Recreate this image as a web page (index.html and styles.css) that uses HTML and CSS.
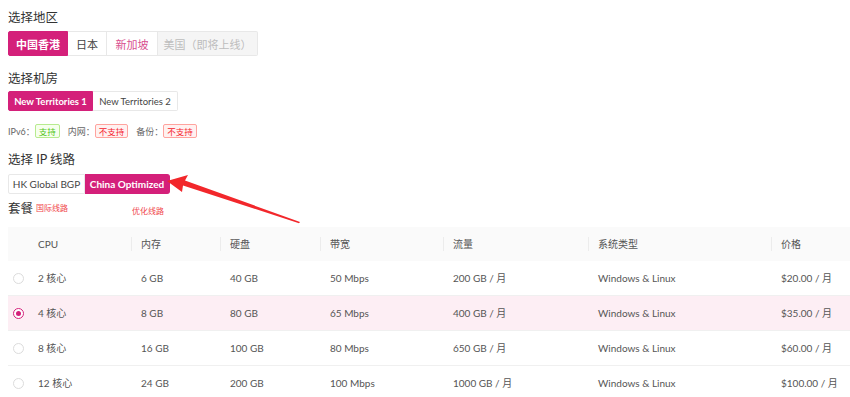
FILE: index.html
```html
<!DOCTYPE html>
<html lang="zh-CN">
<head>
<meta charset="utf-8">
<title>选择套餐</title>
<link rel="stylesheet" href="styles.css">
</head>
<body>
<div class="page">
  <div class="title">选择地区</div>
  <div class="group group-lg">
    <span class="btn active">中国香港</span>
    <span class="btn">日本</span>
    <span class="btn hover">新加坡</span>
    <span class="btn disabled">美国（即将上线）</span>
  </div>

  <div class="title mt">选择机房</div>
  <div class="group group-sm group-room">
    <span class="btn active">New Territories 1</span>
    <span class="btn">New Territories 2</span>
  </div>

  <div class="features">
    <span class="label">IPv6：</span><span class="tag tag-ok">支持</span>
    <span class="label">内网：</span><span class="tag tag-no">不支持</span>
    <span class="label">备份：</span><span class="tag tag-no">不支持</span>
  </div>

  <div class="title mt2">选择 IP 线路</div>
  <div class="group group-sm group-line">
    <span class="btn">HK Global BGP</span>
    <span class="btn active">China Optimized</span>
  </div>

  <div class="title plan">套餐</div>

  <div class="table">
    <div class="row head">
      <div class="cell"></div>
      <div class="cell">CPU</div>
      <div class="cell sep">内存</div>
      <div class="cell sep">硬盘</div>
      <div class="cell sep">带宽</div>
      <div class="cell sep">流量</div>
      <div class="cell sep">系统类型</div>
      <div class="cell sep">价格</div>
    </div>
    <div class="row">
      <div class="cell"><span class="radio"></span></div>
      <div class="cell">2 核心</div><div class="cell">6 GB</div><div class="cell">40 GB</div><div class="cell">50 Mbps</div><div class="cell">200 GB / 月</div><div class="cell">Windows &amp; Linux</div><div class="cell">$20.00 / 月</div>
    </div>
    <div class="row selected">
      <div class="cell"><span class="radio checked"></span></div>
      <div class="cell">4 核心</div><div class="cell">8 GB</div><div class="cell">80 GB</div><div class="cell">65 Mbps</div><div class="cell">400 GB / 月</div><div class="cell">Windows &amp; Linux</div><div class="cell">$35.00 / 月</div>
    </div>
    <div class="row">
      <div class="cell"><span class="radio"></span></div>
      <div class="cell">8 核心</div><div class="cell">16 GB</div><div class="cell">100 GB</div><div class="cell">80 Mbps</div><div class="cell">650 GB / 月</div><div class="cell">Windows &amp; Linux</div><div class="cell">$60.00 / 月</div>
    </div>
    <div class="row">
      <div class="cell"><span class="radio"></span></div>
      <div class="cell">12 核心</div><div class="cell">24 GB</div><div class="cell">200 GB</div><div class="cell">100 Mbps</div><div class="cell">1000 GB / 月</div><div class="cell">Windows &amp; Linux</div><div class="cell">$100.00 / 月</div>
    </div>
  </div>

  <span class="note note-1">国际线路</span>
  <span class="note note-2">优化线路</span>
  <svg class="arrow" width="850" height="397" viewBox="0 0 850 397">
    <polygon points="167,181 188,175 185,180.5 300,222 299,223.2 183,185.5 182,192" fill="#f2272b"/>
  </svg>
</div>
</body>
</html>
```
FILE: styles.css
```css
* { box-sizing: border-box; }
html, body { margin: 0; padding: 0; background: #fff; }
body {
  font-family: Lato, "Noto Sans CJK SC", sans-serif;
  color: #333;
  overflow: hidden;
}
.page {
  position: relative;
  padding: 8px 0 0 8px;
  width: 850px;
  height: 397px;
}
.title {
  font-size: 12.5px;
  line-height: 20px;
  height: 20px;
  color: #333;
  margin-bottom: 3px;
}
.title.mt { margin-top: 13px; margin-bottom: 2px; }
.title.mt2 { margin-top: 12px; margin-bottom: 4px; }
.title.plan { margin-top: 5px; margin-bottom: 8px; }

.group { display: flex; }
.btn {
  display: flex;
  align-items: center;
  justify-content: center;
  border: 1px solid #e8e8e8;
  border-left-width: 0;
  background: #fff;
  color: #444;
  white-space: nowrap;
}
.btn:first-child { border-left-width: 1px; border-radius: 2px 0 0 2px; }
.btn:last-child { border-radius: 0 2px 2px 0; }
.btn.active { background: #d4207a; border-color: #d4207a; color: #fff; font-weight: 700; }
.btn.hover { color: #d9508f; }
.btn.disabled { background: #f5f5f5; color: #bdbdbd; }

.group-lg .btn { height: 25px; font-size: 11px; padding: 0 8px; }
.group-lg .btn:first-child { width: 60px; padding: 0; }
.group-lg .btn:nth-child(2) { width: 39px; padding: 0; }
.group-lg .btn:nth-child(3) { width: 51px; padding: 0; }
.group-lg .btn.disabled { padding: 0 4px; width: 100px; }
.group-sm .btn { height: 20px; font-size: 9.5px; padding: 0; }
.group-room .btn { width: 85px; }
.group-line .btn { font-size: 10px; }
.group-line .btn:first-child { width: 77px; }
.group-line .btn.active { width: 85px; border-radius: 0 3px 3px 0; }

.features {
  display: flex;
  align-items: center;
  height: 14px;
  margin-top: 13px;
  font-size: 9px;
}
.label { color: #666; }
.tag {
  display: inline-flex;
  align-items: center;
  height: 14px;
  padding: 0 3px;
  border: 1px solid;
  border-radius: 2px;
  margin-right: 8px;
  font-size: 8.5px;
}
.tag-ok { background: #f6ffed; border-color: #b7eb8f; color: #52c41a; }
.tag-no { background: #fff1f0; border-color: #ffa39e; color: #f5222d; }

.table { margin-right: -8px; width: 842px; font-size: 10px; color: #555; }
.row {
  display: grid;
  grid-template-columns: 20px 103px 89px 100px 123px 145px 183px 79px;
  height: 35px;
  align-items: center;
  border-bottom: 1px solid #f0f0f0;
}
.row.head { height: 34px; background: #fafafa; border-bottom: 0; color: #555; }
.row.selected { background: #fdeef4; }
.cell { padding-left: 10px; position: relative; white-space: nowrap; line-height: 14px; }
.row .cell:first-child { padding-left: 0; display: flex; justify-content: center; }
.cell.sep::before {
  content: "";
  position: absolute;
  left: 0;
  top: 0;
  width: 1px;
  height: 14px;
  background: #ececec;
}
.radio {
  display: block;
  width: 11px;
  height: 11px;
  border: 1px solid #dcdcdc;
  border-radius: 50%;
  background: #fff;
  position: relative;
}
.radio.checked { border-color: #d4207a; }
.radio.checked::after {
  content: "";
  position: absolute;
  left: 2px; top: 2px;
  width: 5px; height: 5px;
  border-radius: 50%;
  background: #d4207a;
}

.note { position: absolute; font-size: 8px; color: #f0464b; line-height: 10px; }
.note-1 { left: 36px; top: 203px; }
.note-2 { left: 132px; top: 206px; }
.arrow { position: absolute; left: 0; top: 0; pointer-events: none; }
```
